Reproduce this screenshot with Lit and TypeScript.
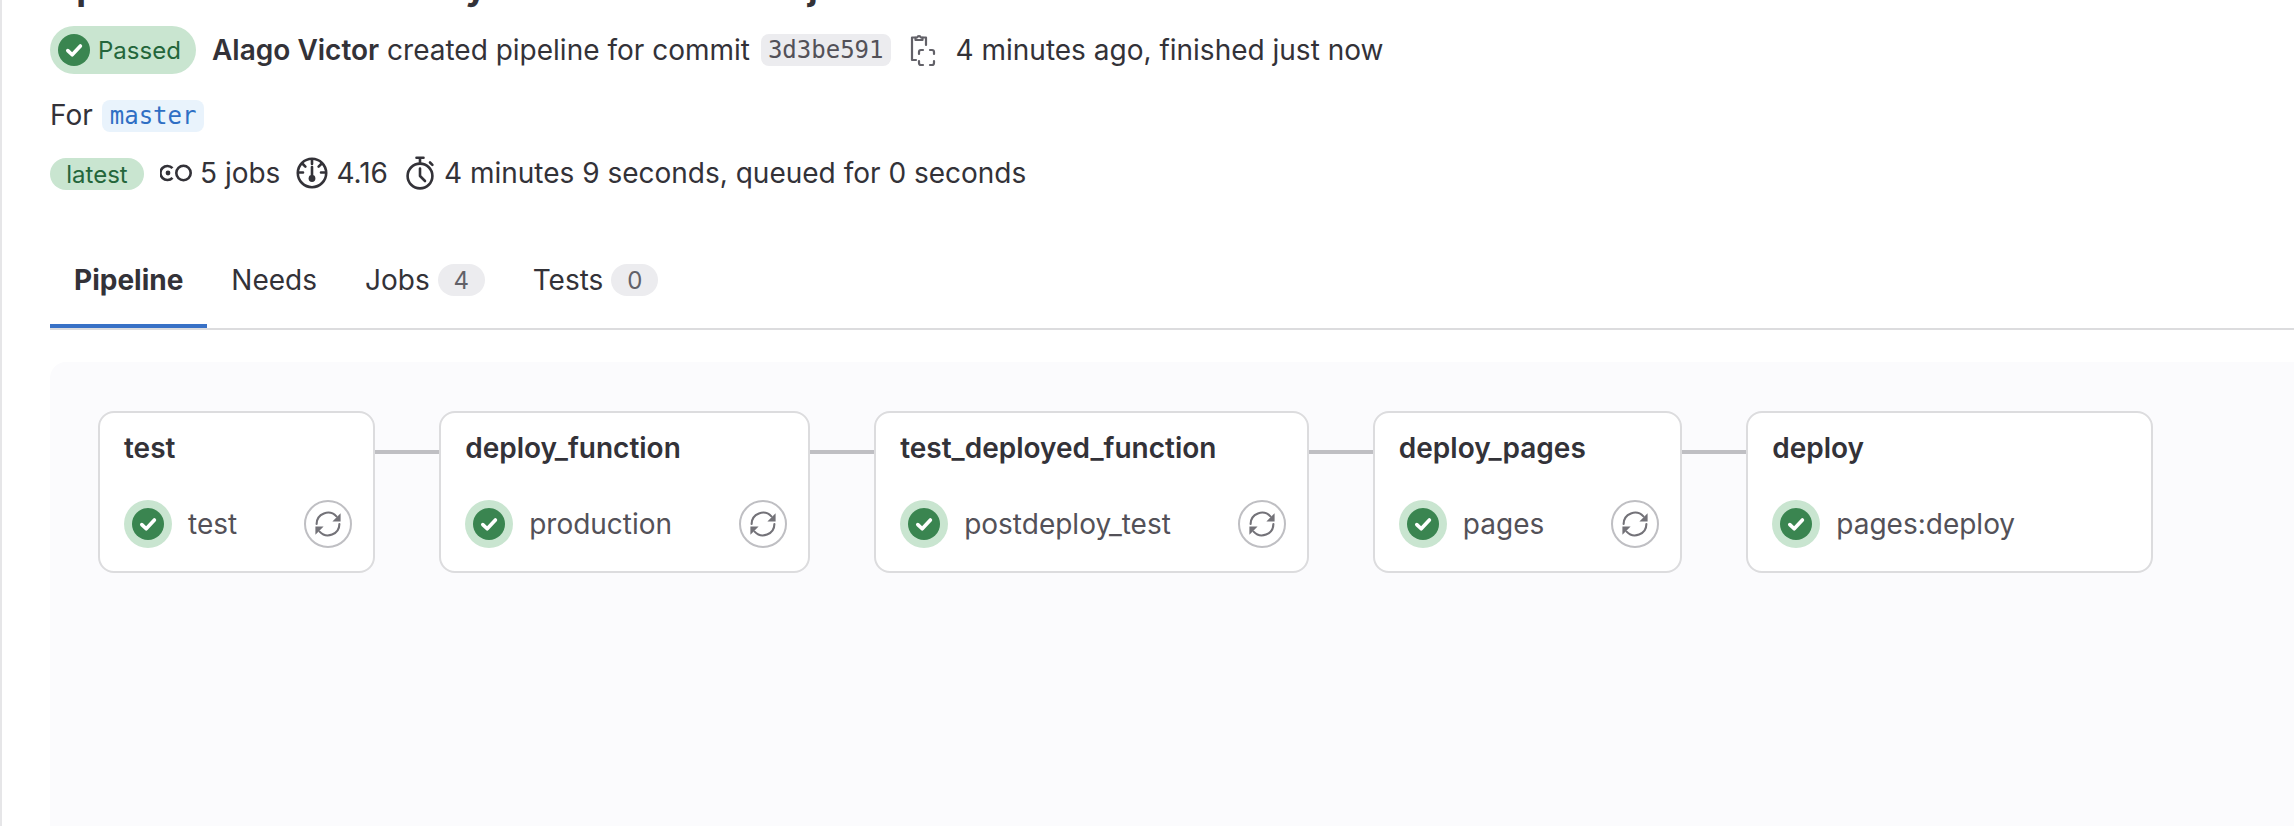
import { LitElement, html, css } from "lit";
import { customElement } from "lit/decorators.js";

const check = (size: number) => html`<svg class="check" width=${size} height=${size} viewBox="0 0 32 32"><circle cx="16" cy="16" r="16" fill="#3a8550"/><path d="M9.8 16.6l4.4 4.2 8.2-8.8" fill="none" stroke="#fff" stroke-width="3.6" stroke-linecap="round" stroke-linejoin="round"/></svg>`;

const retry = html`<svg width="26" height="26" viewBox="0 0 26 26" fill="none"><g stroke="#737278" stroke-width="2.1" stroke-linecap="round"><path d="M1.6 13A11.4 11.4 0 0 1 21.4 5.4"/><path d="M24.4 13A11.4 11.4 0 0 1 4.6 20.6"/></g><path d="M25.6 2.2V10.4h-8.2z M0.4 23.8V15.6h8.2z" fill="#737278"/></svg>`;

const clipboard = html`<svg class="clip" width="28" height="36" viewBox="0 0 28 36" fill="none" stroke="#626168" stroke-width="2.2" stroke-linecap="round" stroke-linejoin="round"><path d="M7 5.5H4V28h4"/><path d="M15 5.5h3V13"/><path d="M7.5 8V5.5h1.6a2 2 0 0 1 3.8 0h1.6V8z"/><path d="M11 22v-2a2 2 0 0 1 2-2h2M22 18h2a2 2 0 0 1 2 2v2M26 29v2a2 2 0 0 1-2 2h-2M15 33h-2a2 2 0 0 1-2-2v-2"/></svg>`;

const stagesIcon = html`<svg width="32" height="32" viewBox="0 0 32 32" fill="none" stroke="#333238" stroke-width="2.6"><path d="M12.5 11.2A7 7 0 1 0 12.5 20.8"/><circle cx="8" cy="16" r="2.4" fill="#333238" stroke="none"/><circle cx="23.5" cy="16" r="7.2"/></svg>`;

const gaugeIcon = html`<svg width="32" height="32" viewBox="0 0 32 32" fill="none" stroke="#333238" stroke-width="2.6" stroke-linecap="round"><circle cx="16" cy="16" r="14.2"/><path d="M16 2.5v4.5M3 15.5h4M25 15.5h4M6.8 7l2.6 2.6M25.2 7l-2.6 2.6"/><path d="M16 10v10" stroke-width="2.6"/><circle cx="16" cy="21.5" r="3.4" fill="#333238" stroke="none"/></svg>`;

const timerIcon = html`<svg width="32" height="34" viewBox="0 0 32 34" fill="none" stroke="#333238" stroke-width="2.6" stroke-linecap="round" stroke-linejoin="round"><circle cx="16" cy="20" r="12.4"/><path d="M12.5 1.8h7M16 2v5M26 6.5l2.4 2.4M16 12.5V20l5 5"/></svg>`;

interface Stage { title: string; job: string; action: boolean; }
const STAGES: Stage[] = [
  { title: "test", job: "test", action: true },
  { title: "deploy_function", job: "production", action: true },
  { title: "test_deployed_function", job: "postdeploy_test", action: true },
  { title: "deploy_pages", job: "pages", action: true },
  { title: "deploy", job: "pages:deploy", action: false },
];

@customElement("app-root")
export class AppRoot extends LitElement {
  static styles = css`
    :host {
      display: flex;
      flex-direction: column;
      height: 826px;
      overflow: hidden;
      box-sizing: border-box;
      border-left: 2px solid #e6e6e8;
      padding-left: 48px;
      background: #fff;
      color: #333238;
      font-family: Inter, "Noto Sans", sans-serif;
      font-size: 28px;
    }
    .title {
      margin: -39px 0 0;
      height: 65px;
      line-height: 52px;
      font-size: 36px;
      font-weight: 700;
      white-space: nowrap;
    }
    .row { display: flex; align-items: center; white-space: pre; }
    .row1 { height: 48px; }
    .row2 { height: 32px; margin-top: 26px; }
    .row3 { height: 32px; margin-top: 26px; }
    .badge {
      display: inline-flex;
      align-items: center;
      height: 48px;
      width: 146px;
      box-sizing: border-box;
      padding-left: 8px;
      gap: 8px;
      border-radius: 24px;
      background: #c9e5d0;
      color: #24663b;
      font-size: 24px;
    }
    .author { margin-left: 16px; font-weight: 600; }
    .chip {
      display: inline-flex;
      align-items: center;
      height: 32px;
      padding: 0 7px;
      border-radius: 8px;
      font-family: "DejaVu Sans Mono", "Liberation Mono", monospace;
      font-size: 24px;
    }
    .sha { margin-left: 11px; background: #ececef; color: #535158; }
    .clip { margin-left: 17px; }
    .ago { margin-left: 20px; }
    .for { padding-bottom: 2px; }
    .ref { margin-left: 9px; padding: 0 8px; background: #e9f3fc; color: #2f6fc4; }
    .latest {
      display: inline-flex;
      align-items: center;
      height: 32px;
      width: 94px;
      justify-content: center;
      border-radius: 16px;
      background: #c9e5d0;
      color: #24663b;
      font-size: 24px;
    }
    .stat { display: inline-flex; align-items: center; gap: 8px; margin-left: 16px; padding-bottom: 2px; }
    .tabs {
      display: flex;
      margin-top: 42px;
      border-bottom: 2px solid #dcdcde;
    }
    .tab {
      display: flex;
      align-items: center;
      gap: 8px;
      height: 96px;
      padding: 0 24px;
      box-sizing: border-box;
    }
    .tab.active { font-weight: 700; box-shadow: inset 0 -4px 0 #3871c6; }
    .count {
      display: inline-flex;
      align-items: center;
      justify-content: center;
      width: 47px;
      height: 32px;
      border-radius: 16px;
      background: #ececef;
      color: #626168;
      font-size: 24px;
    }
    .panel {
      flex: 1;
      margin-top: 32px;
      padding: 49px 0 0 48px;
      border-radius: 16px 0 0 0;
      background: #fbfbfd;
      display: flex;
      align-items: flex-start;
    }
    .card {
      flex: none;
      box-sizing: border-box;
      height: 162px;
      padding: 17px 21px 0 24px;
      border: 2px solid #dcdcde;
      border-radius: 16px;
      background: #fff;
    }
    .card h3 {
      margin: 0;
      height: 36px;
      line-height: 36px;
      font-size: 28px;
      font-weight: 600;
    }
    .job { display: flex; align-items: center; margin-top: 34px; height: 48px; }
    .ring {
      display: flex;
      align-items: center;
      justify-content: center;
      width: 48px;
      height: 48px;
      border-radius: 50%;
      background: #c9e5d0;
    }
    .name { margin: 0 67px 0 16px; color: #535158; white-space: nowrap; }
    .action {
      display: flex;
      align-items: center;
      justify-content: center;
      width: 48px;
      height: 48px;
      box-sizing: border-box;
      border: 2px solid #bfbfc3;
      border-radius: 50%;
    }
    .hidden { visibility: hidden; }
    .link { flex: none; width: 64px; height: 4px; margin-top: 39px; background: #bfbfc3; }
  `;

  render() {
    return html`
      <h1 class="title">Update the readme entry to include the subject</h1>
      <div class="row row1">
        <span class="badge">${check(32)}Passed</span>
        <span class="author">Alago Victor</span><span> created pipeline for commit</span>
        <span class="chip sha">3d3be591</span>
        ${clipboard}
        <span class="ago">4 minutes ago, finished just now</span>
      </div>
      <div class="row row2"><span class="for">For</span><span class="chip ref">master</span></div>
      <div class="row row3">
        <span class="latest">latest</span>
        <span class="stat">${stagesIcon}5 jobs</span>
        <span class="stat">${gaugeIcon}4.16</span>
        <span class="stat">${timerIcon}4 minutes 9 seconds, queued for 0 seconds</span>
      </div>
      <nav class="tabs">
        <div class="tab active">Pipeline</div>
        <div class="tab">Needs</div>
        <div class="tab">Jobs<span class="count">4</span></div>
        <div class="tab">Tests<span class="count">0</span></div>
      </nav>
      <section class="panel">
        ${STAGES.map((s, i) => html`
          ${i > 0 ? html`<div class="link"></div>` : ""}
          <div class="card">
            <h3>${s.title}</h3>
            <div class="job">
              <span class="ring">${check(32)}</span>
              <span class="name">${s.job}</span>
              <span class="action ${s.action ? "" : "hidden"}">${retry}</span>
            </div>
          </div>
        `)}
      </section>
    `;
  }
}
